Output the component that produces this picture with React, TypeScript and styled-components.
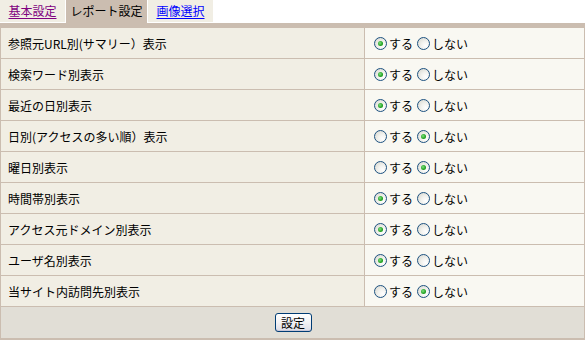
import React from "react";
import styled, { createGlobalStyle } from "styled-components";

const GlobalStyle = createGlobalStyle`
  html, body { margin: 0; padding: 0; background: #ffffff; }
  body { font-family: "Noto Sans CJK JP", "Noto Sans", sans-serif; font-size: 12px; color: #000; }
`;

const Page = styled.div`
  width: 585px;
  height: 340px;
  display: flex;
  flex-direction: column;
`;

const TabBar = styled.div`
  display: flex;
  align-items: flex-start;
  height: 23px;
`;

const Tab = styled.div<{ $active?: boolean; $w: number; $gap: number }>`
  width: ${(p) => p.$w}px;
  margin-right: ${(p) => p.$gap}px;
  height: ${(p) => (p.$active ? 23 : 22)}px;
  background: ${(p) => (p.$active ? "#cbbdb0" : "#f1eee4")};
  display: flex;
  align-items: center;
  justify-content: center;
  line-height: 1;
  padding-bottom: 1px;
  box-sizing: border-box;
`;

const TabLink = styled.a<{ $visited?: boolean }>`
  color: ${(p) => (p.$visited ? "#800080" : "#0000ff")};
  text-decoration: underline;
  text-underline-offset: 2px;
  cursor: pointer;
`;

const Panel = styled.div`
  background: #cbbdb0;
  padding: 5px 1px 2px 1px;
  display: flex;
  flex-direction: column;
  gap: 1px;
  flex: 1;
`;

const Row = styled.div`
  display: grid;
  grid-template-columns: 363px 1fr;
  gap: 1px;
  height: 30px;
`;

const LabelCell = styled.div`
  background: #f1eee4;
  display: flex;
  align-items: center;
  padding-left: 7px;
`;

const OptionCell = styled.div`
  background: #f9f8f2;
  display: flex;
  align-items: center;
  padding-left: 9px;
  padding-top: 1px;
`;

const Option = styled.label`
  display: inline-flex;
  align-items: center;
  margin-right: 4px;
  cursor: pointer;
`;

const RadioCircle = styled.span<{ $checked?: boolean }>`
  width: 13px;
  height: 13px;
  box-sizing: border-box;
  border-radius: 50%;
  border: 1px solid #1c5180;
  background: radial-gradient(circle at 70% 70%, #ffffff 0%, #f2f2ee 40%, #d4d4cc 100%);
  margin-right: 2px;
  display: inline-flex;
  align-items: center;
  justify-content: center;
  &::after {
    content: "";
    display: ${(p) => (p.$checked ? "block" : "none")};
    width: 5px;
    height: 5px;
    border-radius: 50%;
    background: radial-gradient(circle at 40% 40%, #7fe07f 0%, #21a121 60%, #1a8a1a 100%);
  }
`;

const Footer = styled.div`
  background: #e1ded6;
  height: 31px;
  display: flex;
  align-items: center;
  justify-content: center;
  padding-left: 1px;
`;

const Button = styled.button`
  font-family: "Noto Sans CJK JP", sans-serif;
  font-size: 12px;
  width: 37px;
  height: 19px;
  padding: 0;
  line-height: 1;
  border: 1px solid #003c74;
  border-radius: 3px;
  background: linear-gradient(#ffffff 0%, #f3f2f5 50%, #dcdce6 100%);
  box-shadow: inset 0 -1px 0 #c7c6d8;
  color: #000;
  cursor: pointer;
`;

type Item = { label: string; on: boolean };

const items: Item[] = [
  { label: "参照元URL別(サマリー）表示", on: true },
  { label: "検索ワード別表示", on: true },
  { label: "最近の日別表示", on: true },
  { label: "日別(アクセスの多い順）表示", on: false },
  { label: "曜日別表示", on: false },
  { label: "時間帯別表示", on: true },
  { label: "アクセス元ドメイン別表示", on: true },
  { label: "ユーザ名別表示", on: true },
  { label: "当サイト内訪問先別表示", on: false },
];

export default function App() {
  return (
    <>
      <GlobalStyle />
      <Page>
        <TabBar>
          <Tab $w={65} $gap={1}>
            <TabLink $visited>基本設定</TabLink>
          </Tab>
          <Tab $w={81} $gap={1} $active>
            レポート設定
          </Tab>
          <Tab $w={65} $gap={0}>
            <TabLink>画像選択</TabLink>
          </Tab>
        </TabBar>
        <Panel>
          {items.map((it) => (
            <Row key={it.label}>
              <LabelCell>{it.label}</LabelCell>
              <OptionCell>
                <Option>
                  <RadioCircle $checked={it.on} />
                  する
                </Option>
                <Option>
                  <RadioCircle $checked={!it.on} />
                  しない
                </Option>
              </OptionCell>
            </Row>
          ))}
          <Footer>
            <Button>設定</Button>
          </Footer>
        </Panel>
      </Page>
    </>
  );
}
